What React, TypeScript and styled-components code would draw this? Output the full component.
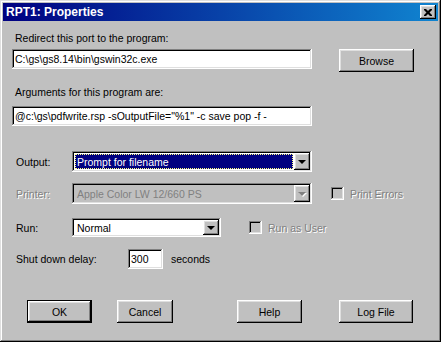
import React from 'react';
import styled, {createGlobalStyle} from 'styled-components';

const GlobalStyle = createGlobalStyle`
  html, body {
    margin: 0;
    padding: 0;
    background: #c0c0c0;
  }
  * {
    box-sizing: border-box;
  }
`;

const raised = `
  box-shadow: inset -1px -1px #000, inset 1px 1px #fff,
    inset -2px -2px #808080, inset 2px 2px #dfdfdf;
`;

const sunken = `
  box-shadow: inset -1px -1px #fff, inset 1px 1px #808080,
    inset -2px -2px #dfdfdf, inset 2px 2px #000;
`;

const Window = styled.div`
  width: 441px;
  height: 342px;
  padding: 3px;
  background: #c0c0c0;
  font-family: "Liberation Sans", Arial, sans-serif;
  font-size: 10.5px;
  color: #000;
  box-shadow: inset -1px -1px #000, inset 1px 1px #dfdfdf,
    inset -2px -2px #808080, inset 2px 2px #fff;
  display: flex;
  flex-direction: column;
`;

const TitleBar = styled.div`
  height: 18px;
  display: flex;
  align-items: center;
  justify-content: space-between;
  padding: 0 2px 0 3px;
  background: linear-gradient(90deg, #000080, #1084d0);
  color: #fff;
  font-weight: bold;
  font-size: 12px;
`;

const CloseButton = styled.div`
  width: 16px;
  height: 14px;
  background: #c0c0c0;
  display: flex;
  align-items: center;
  justify-content: center;
  ${raised}
`;

const Body = styled.div`
  flex: 1;
  padding: 0 0 0 9px;
  display: flex;
  flex-direction: column;
`;

const Caption = styled.div<{top: number}>`
  margin-top: ${p => p.top}px;
  margin-left: 3px;
  height: 14px;
  line-height: 14px;
  white-space: nowrap;
`;

const Row = styled.div<{top: number}>`
  margin-top: ${p => p.top}px;
  display: flex;
  align-items: flex-start;
`;

const TextBox = styled.div<{w: number}>`
  width: ${p => p.w}px;
  height: 20px;
  background: #fff;
  padding: 0 3px;
  line-height: 20px;
  white-space: nowrap;
  overflow: hidden;
  ${sunken}
`;

const Button = styled.div<{w: number; gap?: number; isDefault?: boolean}>`
  width: ${p => p.w}px;
  height: 23px;
  margin-left: ${p => p.gap || 0}px;
  display: flex;
  align-items: center;
  justify-content: center;
  background: #c0c0c0;
  ${p => p.isDefault
    ? `box-shadow: inset 0 0 0 1px #000, inset -2px -2px #000, inset 2px 2px #fff,
        inset -3px -3px #808080, inset 3px 3px #dfdfdf;`
    : raised}
`;

const FieldLabel = styled.div<{disabled?: boolean; w?: number}>`
  width: ${p => p.w || 60}px;
  padding-left: 4px;
  white-space: nowrap;
  color: ${p => (p.disabled ? '#808080' : '#000')};
  text-shadow: ${p => (p.disabled ? '1px 1px #fff' : 'none')};
`;

const FieldRow = styled.div<{top: number}>`
  margin-top: ${p => p.top}px;
  display: flex;
  align-items: center;
`;

const Combo = styled.div<{w: number; h?: number; disabled?: boolean}>`
  width: ${p => p.w}px;
  height: ${p => p.h || 21}px;
  padding: 2px;
  display: flex;
  background: ${p => (p.disabled ? '#c0c0c0' : '#fff')};
  ${sunken}
`;

const ComboText = styled.div<{selected?: boolean; disabled?: boolean}>`
  flex: 1;
  margin: 1px;
  padding-left: 2px;
  display: flex;
  align-items: center;
  white-space: nowrap;
  color: ${p => (p.disabled ? '#808080' : p.selected ? '#fff' : '#000')};
  background: ${p => (p.selected ? '#000080' : 'transparent')};
  outline: ${p => (p.selected ? '1px dotted #ffff80' : 'none')};
  outline-offset: -1px;
`;

const DropButton = styled.div`
  width: 16px;
  background: #c0c0c0;
  display: flex;
  align-items: center;
  justify-content: center;
  ${raised}
`;

const Arrow = styled.div<{disabled?: boolean}>`
  width: 0;
  height: 0;
  border-left: 4px solid transparent;
  border-right: 4px solid transparent;
  border-top: 4px solid ${p => (p.disabled ? '#808080' : '#000')};
  filter: ${p => (p.disabled ? 'drop-shadow(1px 1px 0 #fff)' : 'none')};
`;

const Check = styled.label<{gap: number}>`
  margin-left: ${p => p.gap}px;
  display: flex;
  align-items: center;
  color: #808080;
  text-shadow: 1px 1px #fff;
  white-space: nowrap;
`;

const CheckBox = styled.span`
  width: 13px;
  height: 13px;
  margin-right: 6px;
  background: #c0c0c0;
  ${sunken}
`;

const Suffix = styled.span`
  margin-left: 8px;
`;

const ButtonBar = styled.div`
  margin-top: 31px;
  padding-left: 15px;
  display: flex;
`;

function Dropdown(props: {w: number; h?: number; text: string; selected?: boolean; disabled?: boolean}) {
  return (
    <Combo w={props.w} h={props.h} disabled={props.disabled}>
      <ComboText selected={props.selected} disabled={props.disabled}>{props.text}</ComboText>
      <DropButton>
        <Arrow disabled={props.disabled} />
      </DropButton>
    </Combo>
  );
}

export default function App() {
  return (
    <>
      <GlobalStyle />
      <Window>
        <TitleBar>
          <span>RPT1: Properties</span>
          <CloseButton>
            <svg width="8" height="7" viewBox="0 0 8 7">
              <path d="M0 0h2l2 2 2-2h2v1l-2.5 2.5L8 6v1H6L4 5 2 7H0V6l2.5-2.5L0 1z" fill="#000" />
            </svg>
          </CloseButton>
        </TitleBar>
        <Body>
          <Caption top={10}>Redirect this port to the program:</Caption>
          <Row top={4}>
            <TextBox w={300}>C:\gs\gs8.14\bin\gswin32c.exe</TextBox>
            <Button w={75} gap={27}>Browse</Button>
          </Row>
          <Caption top={13}>Arguments for this program are:</Caption>
          <Row top={7}>
            <TextBox w={300}>@c:\gs\pdfwrite.rsp -sOutputFile="%1" -c save pop -f -</TextBox>
          </Row>
          <FieldRow top={25}>
            <FieldLabel>Output:</FieldLabel>
            <Dropdown w={240} text="Prompt for filename" selected />
          </FieldRow>
          <FieldRow top={11}>
            <FieldLabel disabled>Printer:</FieldLabel>
            <Dropdown w={240} text="Apple Color LW 12/660 PS" disabled />
            <Check gap={19}>
              <CheckBox />
              Print Errors
            </Check>
          </FieldRow>
          <FieldRow top={14}>
            <FieldLabel>Run:</FieldLabel>
            <Dropdown w={149} h={19} text="Normal" />
            <Check gap={28}>
              <CheckBox />
              Run as User
            </Check>
          </FieldRow>
          <FieldRow top={12}>
            <FieldLabel w={116}>Shut down delay:</FieldLabel>
            <TextBox w={35}>300</TextBox>
            <Suffix>seconds</Suffix>
          </FieldRow>
          <ButtonBar>
            <Button w={65} isDefault>OK</Button>
            <Button w={56} gap={25}>Cancel</Button>
            <Button w={65} gap={64}>Help</Button>
            <Button w={74} gap={37}>Log File</Button>
          </ButtonBar>
        </Body>
      </Window>
    </>
  );
}
